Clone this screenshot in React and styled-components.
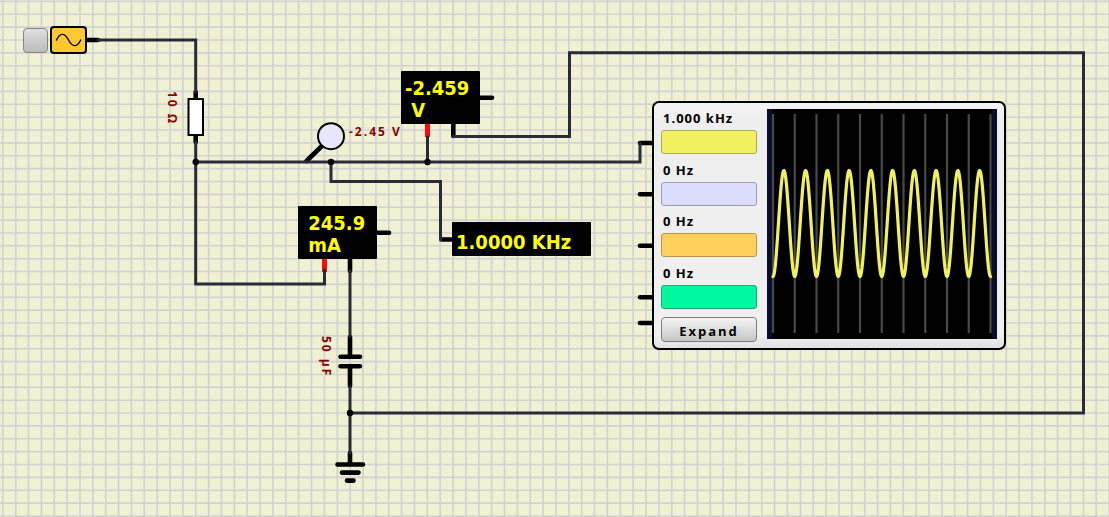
import React from "react";
import styled, { createGlobalStyle } from "styled-components";

const GlobalStyle = createGlobalStyle`
  body {
    margin: 0;
    background: #f0f0d2;
    font-family: "Open Sans", "Noto Sans", sans-serif;
  }
  * { box-sizing: border-box; }
`;

const Canvas = styled.main`
  position: relative;
  min-height: 100vh;
  overflow: hidden;
`;

const Drawing = styled.svg`
  position: absolute;
  inset: 0;
  width: 100%;
  height: 100%;
  display: block;
`;

const Node = styled.div`
  position: absolute;
  left: ${(p) => p.$x}px;
  top: ${(p) => p.$y}px;
`;

const SourceGroup = styled(Node)`
  display: flex;
  align-items: center;
  gap: 2px;
`;

const PowerButton = styled.button`
  width: 25px;
  height: 25px;
  padding: 0;
  border: 1px solid #858585;
  border-radius: 4px;
  background: linear-gradient(#dedede, #bcbcbc);
`;

const Source = styled.div`
  display: flex;
  width: 37px;
  height: 28px;
  border: 2px solid #000;
  border-radius: 4px;
  background: #ffc830;
`;

const Display = styled.output`
  display: block;
  padding: ${(p) => (p.$wide ? "9px 20px 3px 4px" : "6px 8px 3px 4px")};
  min-width: ${(p) => (p.$wide ? 139 : 79)}px;
  border-radius: 1px;
  background: #000;
  color: #ffff00;
  font: bold 20px/22px "DejaVu Sans Condensed", "DejaVu Sans", sans-serif;
  white-space: pre;
`;

const ValueLabel = styled.span`
  display: block;
  color: #860000;
  font-size: 12px;
  line-height: 16px;
  font-weight: 700;
  letter-spacing: 2px;
  white-space: nowrap;
  writing-mode: ${(p) => (p.$vertical ? "vertical-rl" : "horizontal-tb")};
`;

const Scope = styled.section`
  display: flex;
  gap: 10px;
  padding: 4px 7px 6px;
  border: 2px solid #000;
  border-radius: 7px;
  background: linear-gradient(#f4f4f4, #eeeeee 8%, #f0f0f0 94%, #e2e2e2);
`;

const Controls = styled.div`
  display: flex;
  flex-direction: column;
  gap: 8px;
  width: 96px;
`;

const Channels = styled.div`
  display: flex;
  flex-direction: column;
  justify-content: space-between;
  height: 202px;
`;

const Channel = styled.label`
  display: flex;
  flex-direction: column;
  gap: 1px;
  color: #000;
  font-size: 13px;
  line-height: 22px;
  font-weight: 700;
  letter-spacing: 1px;
  white-space: nowrap;
`;

const Frequency = styled.span`
  padding-left: 2px;
`;

const ChannelButton = styled.button`
  height: 24px;
  padding: 0;
  border: 1px solid ${(p) => p.$edge};
  border-radius: 3px;
  background: ${(p) => p.$color};
`;

const ExpandButton = styled.button`
  height: 25px;
  padding: 2px 0 0;
  border: 1px solid #7c7c7c;
  border-radius: 4px;
  background: linear-gradient(#f4f4f4, #c6c6c6);
  color: #000;
  font: 700 13px/18px "Open Sans", "Noto Sans", sans-serif;
  letter-spacing: 2px;
`;

const Screen = styled.div`
  width: 230px;
  padding-top: 2px;
`;

const Trace = styled.svg`
  display: block;
  background: #000;
`;

const channels = [
  { frequency: "1.000 kHz", color: "#f0f060", edge: "#abab4a" },
  { frequency: "0 Hz", color: "#dcdcff", edge: "#9c9cb4" },
  { frequency: "0 Hz", color: "#ffd05c", edge: "#b59645" },
  { frequency: "0 Hz", color: "#00f8a0", edge: "#1caa76" },
];

const wires = [
  "M98 40H195.7V92",
  "M195.7 142V284H324.5V270",
  "M195.7 162H640V143",
  "M427.5 137V162",
  "M453.3 136.5H569.5V52.7H1083.5V413H350",
  "M331 162V181.5H440.5V240",
  "M350 271V336",
  "M350 387V453",
];

const pins = [
  "M87 40H98",
  "M195.7 92V98",
  "M195.7 136V142",
  "M480 97.8H492",
  "M453.3 124V136",
  "M377 232.8H389",
  "M350 259V271",
  "M442 239.5H452",
  "M350 337V357",
  "M350 366V386",
  "M350 453V463",
  "M640 143H653",
  "M640 194.3H653",
  "M640 245.7H653",
  "M640 297.2H653",
  "M640 323H653",
];

const junctions = [[195.7, 162], [331, 162], [427.5, 162], [350, 413]];

const PITCH = 12.864;
const gridPath = Array.from({ length: 220 }, (_, i) => {
  const x = (2.8 + i * PITCH).toFixed(1);
  const y = (1.4 + i * PITCH).toFixed(1);
  return `M${x} 0V2800M0 ${y}H2800`;
}).join("");

const divisions = Array.from({ length: 11 }, (_, i) => 6 + i * 21.75);
const wave = Array.from({ length: 436 }, (_, i) => {
  const x = i / 2;
  const y = 114.5 + 53 * Math.cos((x / 21.75) * Math.PI * 2);
  return `${i ? "L" : "M"}${(x + 6).toFixed(1)} ${y.toFixed(2)}`;
}).join("");

function Schematic() {
  return (
    <Drawing aria-hidden="true">
      <path d={gridPath} stroke="#d2d2d2" strokeWidth="1.6" fill="none" />
      <g fill="none" stroke="#000" strokeWidth="4.6" strokeLinecap="round">
        {pins.map((d) => <path key={d} d={d} />)}
        <path d="M306.5 161L323 145" />
        <path d="M340.5 356.7H360M340.5 366.2H360M337.5 464.5H363M342 472.6H358.5M347 480.6H353.5" />
      </g>
      <path d="M427.5 124V137M324.5 259V272" stroke="#ff0a0a" strokeWidth="5" />
      <g fill="none" stroke="#2a2a38" strokeWidth="3" strokeLinecap="round">
        {wires.map((d) => <path key={d} d={d} />)}
      </g>
      {junctions.map(([x, y]) => <circle key={`${x}-${y}`} cx={x} cy={y} r="3.2" />)}
      <rect x="188.5" y="99" width="14.5" height="36" fill="#fff" stroke="#000" strokeWidth="2" />
      <circle cx="331" cy="136.2" r="13" fill="#e6e6ff" stroke="#000" strokeWidth="2" />
    </Drawing>
  );
}

export default function App() {
  return (
    <>
      <GlobalStyle />
      <Canvas>
        <Schematic />
        <SourceGroup $x={23} $y={26}>
          <PowerButton aria-label="Toggle source" />
          <Source>
            <svg width="33" height="24" viewBox="0 0 33 24" fill="none" stroke="#000" strokeWidth="1.4" strokeLinecap="round" aria-hidden="true">
              <path d="M4.5 12C8 4.500 12.500 4.500 16.500 12S25 19.500 28.800 12" />
            </svg>
          </Source>
        </SourceGroup>
        <Node $x={164} $y={91}><ValueLabel $vertical>10 Ω</ValueLabel></Node>
        <Node $x={349} $y={124}><ValueLabel>-2.45 V</ValueLabel></Node>
        <Node $x={318} $y={336}><ValueLabel $vertical>50 µF</ValueLabel></Node>
        <Node $x={401} $y={71}><Display>{"-2.459\n V"}</Display></Node>
        <Node $x={298} $y={206}><Display>{" 245.9\n mA"}</Display></Node>
        <Node $x={452} $y={222}><Display $wide>1.0000 KHz</Display></Node>
        <Node $x={652} $y={101}>
          <Scope aria-label="Oscilloscope">
            <Controls>
              <Channels>
                {channels.map((c, i) => (
                  <Channel key={i}>
                    <Frequency>{c.frequency}</Frequency>
                    <ChannelButton $color={c.color} $edge={c.edge} />
                  </Channel>
                ))}
              </Channels>
              <ExpandButton>Expand</ExpandButton>
            </Controls>
            <Screen>
              <Trace width="230" height="230" viewBox="0 0 230 230" fill="none" role="img" aria-label="Waveform">
                <path d="M0 0H5V230H0ZM225 0H230V230H225Z" fill="#0a0c2c" />
                {divisions.map((x) => <path key={x} d={`M${x} 5V224`} stroke="#484848" strokeWidth="2.2" />)}
                <path d={wave} stroke="#f0f060" strokeWidth="3.2" strokeLinejoin="round" strokeLinecap="round" />
              </Trace>
            </Screen>
          </Scope>
        </Node>
      </Canvas>
    </>
  );
}
